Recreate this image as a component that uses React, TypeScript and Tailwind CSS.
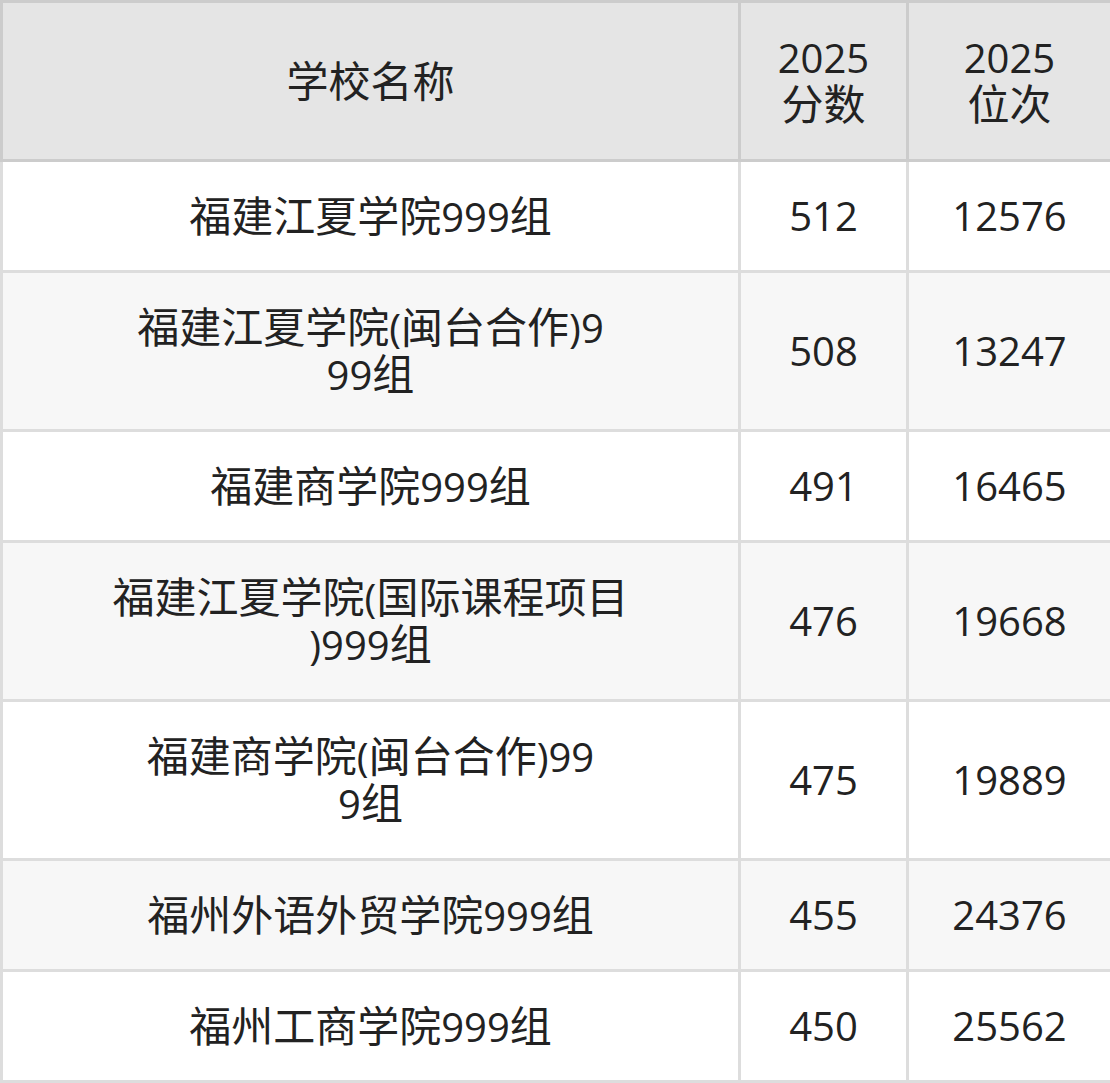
const rows: { name: string[]; score: string; rank: string; tall?: boolean }[] = [
  { name: ["福建江夏学院999组"], score: "512", rank: "12576" },
  { name: ["福建江夏学院(闽台合作)9", "99组"], score: "508", rank: "13247", tall: true },
  { name: ["福建商学院999组"], score: "491", rank: "16465" },
  { name: ["福建江夏学院(国际课程项目", ")999组"], score: "476", rank: "19668", tall: true },
  { name: ["福建商学院(闽台合作)99", "9组"], score: "475", rank: "19889", tall: true },
  { name: ["福州外语外贸学院999组"], score: "455", rank: "24376" },
  { name: ["福州工商学院999组"], score: "450", rank: "25562" },
];

// CJK runs sit a touch larger than the Latin digits, like the source rendering
function Mixed({ text }: { text: string }) {
  const parts = text.split(/([\u4e00-\u9fff]+)/).filter(Boolean);
  return (
    <>
      {parts.map((part, i) =>
        /[\u4e00-\u9fff]/.test(part) ? (
          <span key={i} className="text-[42px]">
            {part}
          </span>
        ) : (
          <span key={i}>{part}</span>
        ),
      )}
    </>
  );
}

function Lines({ lines }: { lines: string[] }) {
  return (
    <>
      {lines.map((line, i) => (
        <div key={i}>
          <Mixed text={line} />
        </div>
      ))}
    </>
  );
}

export default function App() {
  return (
    <div className="w-[1110px] bg-white font-['Open_Sans','Noto_Sans_CJK_SC',sans-serif] text-[40px] leading-[46px] text-[#222]">
      <table className="w-[1110px] table-fixed border-collapse">
        <colgroup>
          <col className="w-[738px]" />
          <col className="w-[168px]" />
          <col className="w-[204px]" />
        </colgroup>
        <thead>
          <tr className="h-[159px] bg-[#e5e5e5]">
            <th className="border-[3px] border-[#ccc] text-center font-normal">
              <Lines lines={["学校名称"]} />
            </th>
            <th className="border-[3px] border-[#ccc] text-center font-normal">
              <Lines lines={["2025", "分数"]} />
            </th>
            <th className="border-[3px] border-[#ccc] text-center font-normal">
              <Lines lines={["2025", "位次"]} />
            </th>
          </tr>
        </thead>
        <tbody>
          {rows.map((row, i) => (
            <tr
              key={row.rank}
              className={`${row.tall ? "h-[159px]" : "h-[111px]"} ${i % 2 === 1 ? "bg-[#f7f7f7]" : "bg-white"}`}
            >
              <td className="border-[3px] border-[#ddd] text-center">
                <Lines lines={row.name} />
              </td>
              <td className="border-[3px] border-[#ddd] text-center">{row.score}</td>
              <td className="border-[3px] border-[#ddd] text-center">{row.rank}</td>
            </tr>
          ))}
        </tbody>
      </table>
    </div>
  );
}
